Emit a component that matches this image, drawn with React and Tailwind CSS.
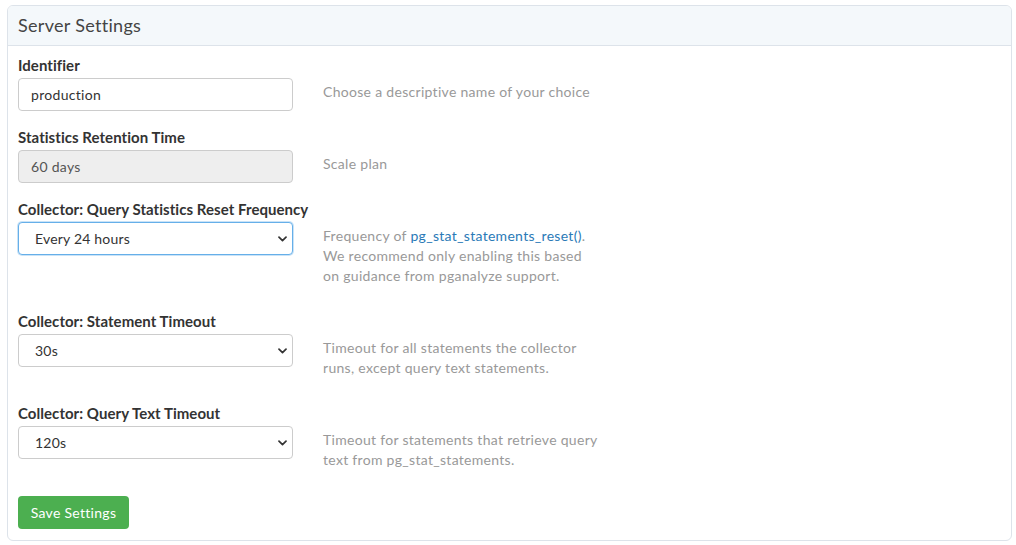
import React from "react";

const font = { fontFamily: "Lato, 'Open Sans', sans-serif" };

function Chevron() {
  return (
    <svg className="pointer-events-none absolute right-[6px] top-1/2 -translate-y-1/2" width="9" height="6" viewBox="0 0 9 6" fill="none">
      <path d="M1 1.2 L4.5 4.6 L8 1.2" stroke="#333" strokeWidth="1.7" strokeLinecap="round" strokeLinejoin="round" />
    </svg>
  );
}

function Select({ value, focused }) {
  return (
    <div className="relative w-[275px]">
      <div
        className={
          "h-[33px] rounded-[4px] border bg-white pl-[16px] text-[14px] tracking-[0.2px] leading-[31px] text-[#333] " +
          (focused ? "border-[#66afe9] shadow-[0_0_0_1px_rgba(102,175,233,0.35)]" : "border-[#ccc]")
        }
      >
        {value}
      </div>
      <Chevron />
    </div>
  );
}

function Row({ label, control, help, last }) {
  return (
    <div className={"flex " + (last ? "" : "mb-[15px]")}>
      <div className="w-[305px] shrink-0">
        <div className="text-[15px] font-bold leading-[20px] tracking-[0.05px] text-[#333] mb-[3px] whitespace-nowrap">{label}</div>
        {control}
      </div>
      <div className="pt-[27px] pb-[10px] text-[14px] leading-[20px] tracking-[0.3px] text-[#999]">{help}</div>
    </div>
  );
}

export default function App() {
  return (
    <div className="bg-white w-[1016px] h-[545px] pt-[5px] px-[7px]" style={font}>
      <div className="w-[1005px] h-[536px] rounded-[6px] border border-[#dde3ea] overflow-hidden">
        <div className="h-[40px] bg-[#f4f8fb] border-b border-[#dde3ea] pl-[10px] text-[18px] tracking-[0.3px] leading-[39px] text-[#444]">
          Server Settings
        </div>
        <div className="pl-[10px] pt-[9px]">
          <Row
            label="Identifier"
            control={
              <div className="h-[33px] w-[275px] rounded-[4px] border border-[#ccc] bg-white pl-[12px] text-[14px] tracking-[0.3px] leading-[31px] text-[#333]">
                production
              </div>
            }
            help="Choose a descriptive name of your choice"
          />
          <Row
            label="Statistics Retention Time"
            control={
              <div className="h-[33px] w-[275px] rounded-[4px] border border-[#ccc] bg-[#eee] pl-[12px] text-[14px] tracking-[0.3px] leading-[31px] text-[#555]">
                60 days
              </div>
            }
            help="Scale plan"
          />
          <Row
            label="Collector: Query Statistics Reset Frequency"
            control={<Select value="Every 24 hours" focused />}
            help={
              <>
                Frequency of <span className="text-[#2a7ab7]">pg_stat_statements_reset()</span>.
                <br />
                We recommend only enabling this based
                <br />
                on guidance from pganalyze support.
              </>
            }
          />
          <Row
            label="Collector: Statement Timeout"
            control={<Select value="30s" />}
            help={
              <>
                Timeout for all statements the collector
                <br />
                runs, except query text statements.
              </>
            }
          />
          <Row
            label="Collector: Query Text Timeout"
            control={<Select value="120s" />}
            help={
              <>
                Timeout for statements that retrieve query
                <br />
                text from pg_stat_statements.
              </>
            }
          />
          <button className="mt-[1px] h-[33px] w-[111px] rounded-[4px] bg-[#4caf50] text-[14px] tracking-[0.3px] text-white">
            Save Settings
          </button>
        </div>
      </div>
    </div>
  );
}
